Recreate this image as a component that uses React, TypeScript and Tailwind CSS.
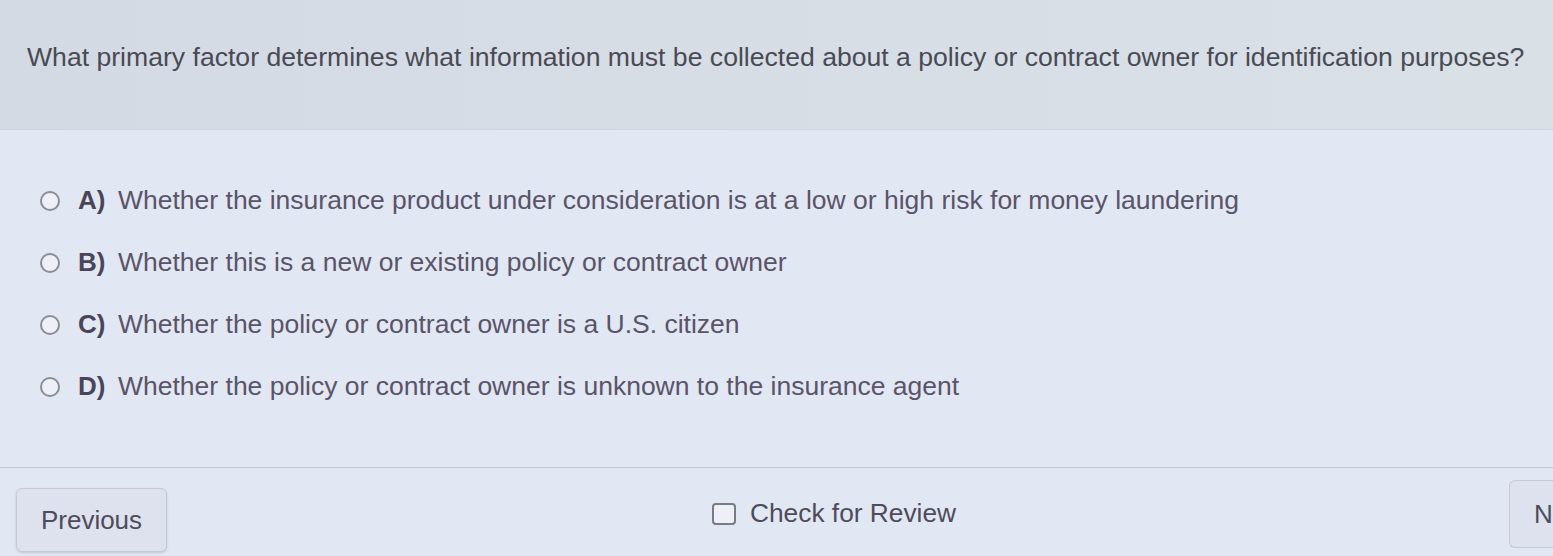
const options = [
  { key: 'A', text: 'Whether the insurance product under consideration is at a low or high risk for money laundering' },
  { key: 'B', text: 'Whether this is a new or existing policy or contract owner' },
  { key: 'C', text: 'Whether the policy or contract owner is a U.S. citizen' },
  { key: 'D', text: 'Whether the policy or contract owner is unknown to the insurance agent' },
];

export default function App() {
  return (
    <div
      className="w-[1553px] h-[556px] overflow-hidden flex flex-col bg-[#e2e7f4] text-[#4b4856]"
      style={{ fontFamily: '"Liberation Sans", Arial, sans-serif' }}
    >
      {/* Question header */}
      <div className="h-[130px] shrink-0 flex items-start pt-[40px] px-[27px] bg-gradient-to-r from-[#d4dae4] to-[#d9e1e7] border-b border-[#d0d6e0]">
        <p className="text-[26.6px] leading-[34px] text-[#4a4a54] whitespace-nowrap">
          What primary factor determines what information must be collected about a policy or contract owner for identification purposes?
        </p>
      </div>

      {/* Answer options */}
      <div className="flex flex-col gap-[29px] pt-[54px] pl-[40px] h-[337px] shrink-0">
        {options.map((o) => (
          <label key={o.key} className="flex items-center h-[33px] cursor-pointer">
            <span className="w-[20px] h-[20px] rounded-full border-2 border-[#8c8c94] bg-[#eef0f7] shrink-0" />
            <span className="ml-[18px] w-[40px] text-[26px] font-bold text-[#4a4458]">{o.key})</span>
            <span className="text-[26.5px] text-[#5a5468] whitespace-nowrap">{o.text}</span>
          </label>
        ))}
      </div>

      {/* Footer */}
      <div className="border-t border-[#c3c7d0] flex-1 flex items-start pt-[20px] pl-[16px]">
        <button className="w-[151px] h-[64px] rounded-[6px] border border-[#c7cad3] bg-[#dde2ee] text-[26px] text-[#4e4c5a] shadow-sm">
          Previous
        </button>
        <label className="flex items-center gap-[14px] mt-[6px] ml-[545px]">
          <span className="w-[24px] h-[22px] rounded-[4px] border-2 border-[#7a7a84] bg-[#eef0f8]" />
          <span className="text-[26.3px] text-[#4e4c5a]">Check for Review</span>
        </label>
        <button className="w-[44px] h-[68px] rounded-l-[6px] border border-r-0 border-[#c7cad3] bg-[#dde2ee] text-[26px] text-[#4e4c5a] text-left pl-[24px] mt-[-8px] ml-auto">
          N
        </button>
      </div>
    </div>
  );
}
